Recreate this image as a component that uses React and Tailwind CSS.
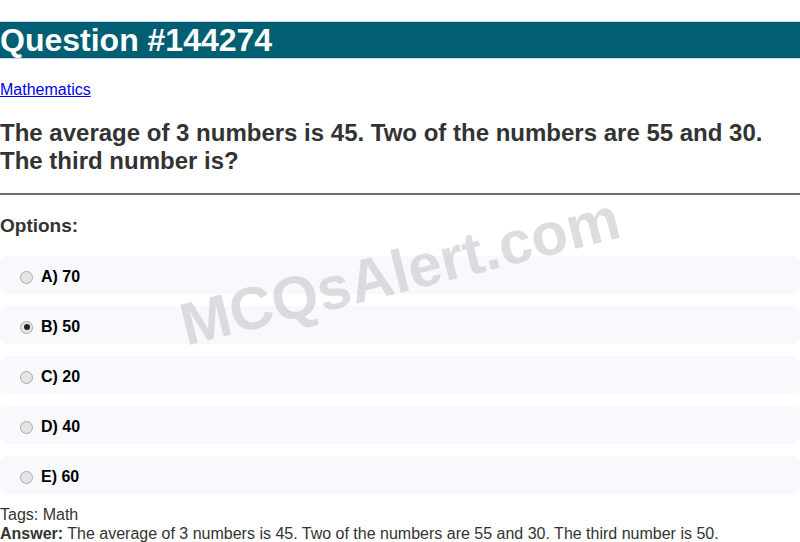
const options = [
  { id: "A", text: "70" },
  { id: "B", text: "50", checked: true },
  { id: "C", text: "20" },
  { id: "D", text: "40" },
  { id: "E", text: "60" },
];

function Radio({ checked }) {
  return (
    <span className="flex h-[13px] w-[13px] items-center justify-center rounded-full border border-[#a9a9a9] bg-[#e4e4e4]">
      {checked && <span className="h-[6px] w-[6px] rounded-full bg-[#222]" />}
    </span>
  );
}

export default function App() {
  return (
    <div className="relative min-h-[542px] bg-white font-['Liberation_Sans',Arial,sans-serif] text-[#333]">
      {/* Header */}
      <div className="pt-[21px]">
        <h1 className="border-y border-[#c8dadd] bg-[#025f73] text-[32px] font-bold leading-[36px] text-white">
          Question #144274
        </h1>
      </div>

      <a href="#" className="mt-[22px] block text-[16px] leading-[18px] text-[#0000ee] underline">
        Mathematics
      </a>

      {/* Question */}
      <h2 className="mt-[20px] text-[24px] font-bold leading-[28px] text-[#333]">
        The average of 3 numbers is 45. Two of the numbers are 55 and 30. The third number is?
      </h2>

      <hr className="mt-[18px] border-t-2 border-[#6e6e6e]" />

      <h3 className="mt-[20px] text-[19px] font-bold leading-[22px] text-[#333]">Options:</h3>

      {/* Options list */}
      <div className="mt-[19px] flex flex-col gap-[12px]">
        {options.map((o) => (
          <div key={o.id} className="flex h-[38px] items-center gap-[8px] rounded-[8px] bg-[#f8f9fc] pl-[20px] pt-[4px]">
            <Radio checked={o.checked} />
            <span className="text-[16px] font-bold text-black">
              {o.id}) {o.text}
            </span>
          </div>
        ))}
      </div>

      <div className="mt-[11px] text-[16px] leading-[19px] text-[#333]">
        <div>Tags: Math</div>
        <div>
          <b>Answer:</b> The average of 3 numbers is 45. Two of the numbers are 55 and 30. The third number is 50.
        </div>
      </div>

      {/* Watermark */}
      <div className="pointer-events-none absolute left-[400px] top-[272px] -translate-x-1/2 -translate-y-1/2 -rotate-[14deg] whitespace-nowrap text-[60px] font-bold leading-none text-[#bdbdc4] opacity-50">
        MCQsAlert.com
      </div>
    </div>
  );
}
